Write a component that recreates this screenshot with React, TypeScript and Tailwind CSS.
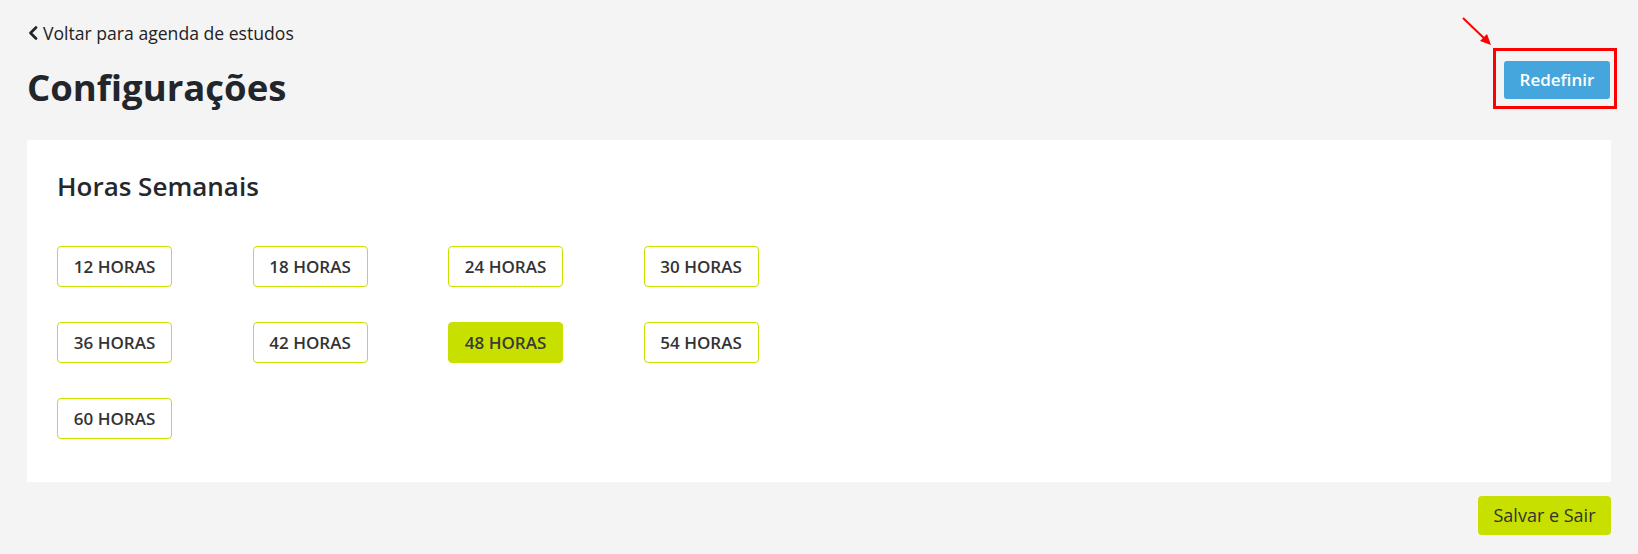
import React, { useState } from 'react';

const HOURS = [12, 18, 24, 30, 36, 42, 48, 54, 60];

export default function App() {
    const [selected, setSelected] = useState(48);

    return (
        <div className="min-h-screen bg-[#f4f4f4] px-[27px] pt-[21px] font-['Open_Sans',sans-serif] text-[#222]">
            {/* Back link */}
            <a href="#" className="flex h-6 items-center gap-[5px] text-[17.6px] leading-6 text-[#222]">
                <svg width="10" height="14" viewBox="0 0 10 14" className="ml-px">
                    <polyline points="8,1.5 2.5,7 8,12.5" fill="none" stroke="#222" strokeWidth="2.6" strokeLinecap="round" strokeLinejoin="round" />
                </svg>
                Voltar para agenda de estudos
            </a>

            {/* Header */}
            <div className="mt-[16px] flex items-start justify-between">
                <h1 className="mt-[3px] text-[36.5px] font-bold leading-[46px] text-[#22262b]">Configurações</h1>
                <div className="relative mr-px">
                    <button className="h-[38px] w-[106px] rounded-[3px] bg-[#45a6dd] text-[17px] font-semibold text-white">
                        Redefinir
                    </button>
                    {/* annotation */}
                    <div className="pointer-events-none absolute -top-[13px] -right-[7px] -bottom-[10px] -left-[11px] border-[3px] border-[#ff0000]" />
                    <svg className="pointer-events-none absolute -top-[44px] -left-[43px]" width="34" height="34" viewBox="0 0 34 34">
                        <line x1="2" y1="1" x2="26" y2="24" stroke="#ff0000" strokeWidth="2" />
                        <polygon points="30,28 19,24 26,17" fill="#ff0000" />
                    </svg>
                </div>
            </div>

            {/* Card */}
            <div className="mt-[30px] bg-white px-[30px] pt-[31px] pb-[43px]">
                <h2 className="text-[26px] font-semibold leading-[31px] text-[#25282b]">Horas Semanais</h2>
                <div className="mt-[44px] grid grid-cols-[repeat(4,115px)] gap-x-[80.5px] gap-y-[35px]">
                    {HOURS.map((h) => (
                        <button
                            key={h}
                            onClick={() => setSelected(h)}
                            className={
                                h === selected
                                    ? 'h-[41px] rounded-[4px] border border-[#c8e000] bg-[#c8e000] text-[17px] font-semibold text-[#3a3a3a]'
                                    : 'h-[41px] rounded-[4px] border border-[#c8e000] bg-white text-[17px] font-semibold text-[#333]'
                            }
                        >
                            {h} HORAS
                        </button>
                    ))}
                </div>
            </div>

            {/* Footer */}
            <div className="mt-[14px] flex justify-end">
                <button className="h-[39px] w-[133px] rounded-[4px] bg-[#c8e000] text-[18px] text-[#333]">
                    Salvar e Sair
                </button>
            </div>
        </div>
    );
}
